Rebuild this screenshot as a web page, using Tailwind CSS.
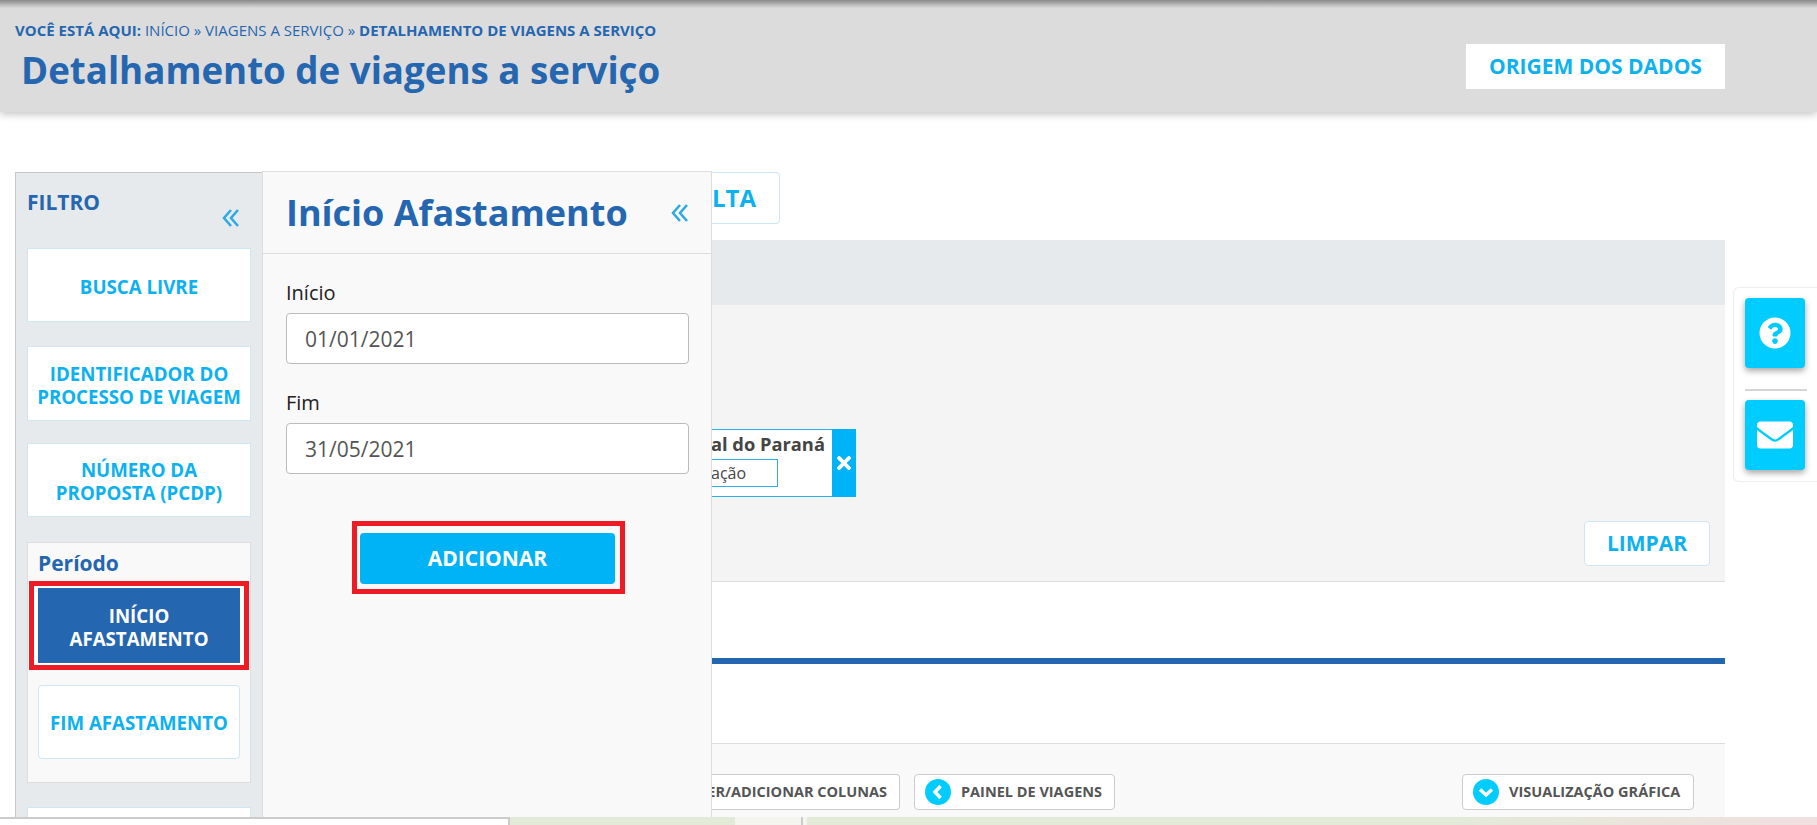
<!DOCTYPE html>
<html lang="pt-BR">
<head>
  <meta charset="UTF-8" />
  <title>Detalhamento de viagens a serviço</title>
  <script src="https://cdn.jsdelivr.net/npm/@tailwindcss/browser@4"></script>
</head>
<body class="bg-white">
<div class="relative h-[825px] w-[1817px] overflow-hidden font-['Open_Sans',sans-serif]">

  <!-- cabecalho -->
  <header class="relative h-[112px] bg-[#dcdcdc] shadow-[0_2px_8px_rgba(0,0,0,0.25)]">
    <div class="h-2 bg-gradient-to-b from-[#8a8a8a] to-[#dcdcdc]"></div>
    <div class="flex items-start justify-between pr-[92px]">
      <div>
        <p class="pl-[15px] pt-3 text-[15px] leading-5 whitespace-nowrap uppercase text-[#2566b0]"><b>Você está aqui:</b> Início » Viagens a serviço » <b>Detalhamento de viagens a serviço</b></p>
        <h1 class="pl-[21px] pt-[6px] text-[36.7px] leading-[48px] font-bold text-[#2566b0]">Detalhamento de viagens a serviço</h1>
      </div>
      <a class="mt-9 flex h-[45px] w-[259px] items-center justify-center bg-white text-[21px] font-bold text-[#0db1f0]">ORIGEM DOS DADOS</a>
    </div>
  </header>

  <!-- conteudo atras dos paineis -->
  <main class="ml-[711px] mr-[92px] pt-[60px]">
    <a class="flex h-[52px] w-[69px] items-center justify-end rounded-r-sm border border-l-0 border-[#cfe6f3] pr-[23px] text-[24px] font-bold text-[#0db1f0]">LTA</a>
    <div class="mt-4 h-[65px] bg-[#e7eaec]"></div>
    <section class="flex h-[277px] flex-col border-b border-[#dddddd] bg-[#f4f4f4]">
      <div class="mt-[124px] flex h-[68px] w-[145px] border-y border-r-0 border-[#2bb0e4] bg-white">
        <div class="flex-1 text-[#444444]">
          <p class="pt-[2px] text-[18.3px] leading-6 font-bold">al do Paraná</p>
          <p class="mt-[3px] flex h-[28px] w-[67px] items-center border-y border-r border-[#2bb0e4] text-[16px]">ação</p>
        </div>
        <span class="-my-px flex w-6 items-center justify-center bg-[#00b2f6]">
          <svg class="h-[14px] w-[14px] fill-white" viewBox="0 80 352 352"><path d="M242.7 256l100-100c12.3-12.3 12.3-32.2 0-44.5l-22.2-22.2c-12.3-12.3-32.2-12.3-44.5 0L176 189.3 76 89.3c-12.3-12.3-32.2-12.3-44.5 0L9.3 111.5c-12.3 12.3-12.3 32.2 0 44.5l100 100-100 100c-12.3 12.3-12.3 32.2 0 44.5l22.2 22.2c12.3 12.3 32.2 12.3 44.5 0l100-100 100 100c12.3 12.3 32.2 12.3 44.5 0l22.2-22.2c12.3-12.3 12.3-32.2 0-44.5z"/></svg>
        </span>
      </div>
      <div class="mt-[24px] flex justify-end pr-[15px]">
        <a class="flex h-[45px] w-[126px] items-center justify-center rounded-sm border border-[#cfe6f3] bg-white text-[21px] font-bold text-[#0db1f0]">LIMPAR</a>
      </div>
    </section>
    <div class="mt-[76px] h-[6px] bg-[#2566b0]"></div>
    <section class="mt-[79px] flex h-[76px] items-start border-t border-[#dddddd] bg-[#f9f9f9] pt-[30px] pr-[31px] text-[14.5px] font-bold whitespace-nowrap text-[#555555]">
      <a class="flex h-9 w-[189px] items-center justify-end rounded-r-sm border-y border-r border-[#cccccc] bg-white pr-3">ER/ADICIONAR COLUNAS</a>
      <a class="ml-[14px] flex h-9 w-[201px] items-center gap-[10px] rounded-sm border border-[#cccccc] bg-white pl-[10px]">
        <svg class="h-[26px] w-[26px] shrink-0" viewBox="0 0 26 26"><circle cx="13" cy="13" r="13" fill="#00ccff"/><path d="M15.5 7 L10 13 L15.5 19" fill="none" stroke="#fff" stroke-width="3.5"/></svg>
        PAINEL DE VIAGENS
      </a>
      <a class="ml-auto flex h-9 w-[232px] items-center gap-[10px] rounded-sm border border-[#cccccc] bg-white pl-[10px]">
        <svg class="h-[26px] w-[26px] shrink-0" viewBox="0 0 26 26"><circle cx="13" cy="13" r="13" fill="#00ccff"/><path d="M7 10.5 L13 16 L19 10.5" fill="none" stroke="#fff" stroke-width="3.5"/></svg>
        VISUALIZAÇÃO GRÁFICA
      </a>
    </section>
  </main>

  <!-- faixa inferior -->
  <div class="absolute inset-x-0 bottom-0 z-20 flex h-2 bg-gradient-to-r from-[#e3ead8] from-80% to-[#f0e0e0]">
    <div class="w-[510px] border-t-2 border-r-2 border-[#cccccc] bg-white"></div>
    <div class="ml-[225px] w-[66px] bg-[#f3f5ee]"></div>
    <div class="w-[6px] border-l-2 border-[#cccccc] bg-[#f3f5ee]"></div>
  </div>

  <!-- painel filtro -->
  <aside class="absolute top-[172px] bottom-0 left-[15px] z-10 flex w-[248px] flex-col border-t border-l border-[#c8c8c8] bg-[#e6eaed] pr-3 pl-[11px]">
    <div class="flex h-[75px] shrink-0 justify-between pt-[13px] pr-[11px]">
      <span class="text-[21px] leading-[32px] font-bold text-[#2566b0]">FILTRO</span>
      <svg class="mt-[22px] h-[20px] w-[18px] fill-none stroke-[#2ba9e0] stroke-[2.5]" viewBox="0 0 18 20"><path d="M9 2 L2 10 L9 18 M16 2 L9 10 L16 18"/></svg>
    </div>
    <a class="flex h-[74px] shrink-0 items-center justify-center border border-[#cfe6f3] bg-white pt-[2px] text-center text-[18.7px] leading-[23px] font-bold text-[#0db1f0]">BUSCA LIVRE</a>
    <a class="mt-6 flex h-[75px] shrink-0 items-center justify-center border border-[#cfe6f3] bg-white pt-[2px] text-center text-[18.7px] leading-[23px] font-bold text-[#0db1f0]">IDENTIFICADOR DO<br>PROCESSO DE VIAGEM</a>
    <a class="mt-[22px] flex h-[74px] shrink-0 items-center justify-center border border-[#cfe6f3] bg-white pt-[2px] text-center text-[18.7px] leading-[23px] font-bold text-[#0db1f0]">NÚMERO DA<br>PROPOSTA (PCDP)</a>
    <div class="mt-[25px] h-[241px] shrink-0 border border-[#dddddd] bg-[#f9f9f9] px-[10px]">
      <p class="h-[38px] pt-[6px] text-[21px] leading-[28px] font-bold text-[#2566b0]">Período</p>
      <div class="-mx-[9px] border-[5px] border-[#ed1c24] bg-white px-[4px] py-[2px]">
        <a class="flex h-[75px] items-center justify-center bg-[#2566b0] pt-[2px] text-center text-[18.7px] leading-[23px] font-bold text-white">INÍCIO<br>AFASTAMENTO</a>
      </div>
      <a class="mt-[15px] flex h-[74px] items-center justify-center rounded-sm border border-[#cfe6f3] bg-white pt-[2px] text-center text-[18.7px] font-bold text-[#0db1f0]">FIM AFASTAMENTO</a>
    </div>
    <div class="mt-6 h-10 shrink-0 border border-[#cfe6f3] bg-white"></div>
  </aside>

  <!-- painel detalhe -->
  <aside class="absolute top-[171px] bottom-0 left-[262px] z-10 w-[450px] border-x border-t border-[#dddddd] bg-[#f9f9f9]">
    <div class="flex h-[82px] items-center justify-between border-b border-[#dddddd] pr-[22px] pl-[23px]">
      <h2 class="text-[36px] font-bold text-[#2566b0]">Início Afastamento</h2>
      <svg class="h-[20px] w-[18px] fill-none stroke-[#2ba9e0] stroke-[2.5]" viewBox="0 0 18 20"><path d="M9 2 L2 10 L9 18 M16 2 L9 10 L16 18"/></svg>
    </div>
    <div class="flex flex-col pt-[25px] pr-[22px] pl-[23px] text-[20px] text-[#222222]">
      <label class="h-[34px] leading-7">Início</label>
      <input class="h-[51px] rounded-sm border border-[#bbbbbb] bg-white px-[18px] text-[21px] text-[#555555]" value="01/01/2021" />
      <label class="mt-[25px] h-[34px] leading-7">Fim</label>
      <input class="h-[51px] rounded-sm border border-[#bbbbbb] bg-white px-[18px] text-[21px] text-[#555555]" value="31/05/2021" />
      <div class="mt-[47px] ml-[66px] self-start border-[5px] border-[#ed1c24] bg-[#f9f9f9] pt-[7px] pr-[5px] pb-[5px] pl-[3px]">
        <button class="block h-[51px] w-[255px] rounded-sm bg-[#00b2f6] text-[21px] font-bold text-white">ADICIONAR</button>
      </div>
    </div>
  </aside>

  <!-- atalhos laterais -->
  <div class="absolute top-[287px] left-[1733px] z-10 flex h-[195px] w-[84px] flex-col rounded-l-md border border-r-0 border-[#eeeeee] pt-[10px] pl-[11px]">
    <a class="flex h-[70px] w-[60px] items-center justify-center rounded-sm bg-[#00ccff] shadow-[0_3px_6px_rgba(0,0,0,0.35)]">
      <svg class="h-8 w-8 fill-white" viewBox="0 0 512 512"><path d="M504 256c0 136.997-111.043 248-248 248S8 392.997 8 256C8 119.083 119.043 8 256 8s248 111.083 248 248zM262.655 90c-54.497 0-89.255 22.957-116.549 63.758-3.536 5.286-2.353 12.415 2.715 16.258l34.699 26.31c5.205 3.947 12.621 3.008 16.665-2.122 17.864-22.658 30.113-35.797 57.303-35.797 20.429 0 45.698 13.148 45.698 32.958 0 14.976-12.363 22.667-32.534 33.976C247.128 238.528 216 254.941 216 296v4c0 6.627 5.373 12 12 12h56c6.627 0 12-5.373 12-12v-1.333c0-28.462 83.186-29.647 83.186-106.667 0-58.002-60.165-102-116.531-102zM256 338c-25.365 0-46 20.635-46 46 0 25.364 20.635 46 46 46s46-20.636 46-46c0-25.365-20.635-46-46-46z"/></svg>
    </a>
    <div class="mt-[21px] mb-[9px] h-[2px] w-[62px] bg-[#d5d5d5]"></div>
    <a class="flex h-[70px] w-[60px] items-center justify-center rounded-sm bg-[#00ccff] shadow-[0_3px_6px_rgba(0,0,0,0.35)]">
      <svg class="h-[36px] w-[36px] fill-white" viewBox="0 0 512 512"><path d="M502.3 190.8c3.9-3.1 9.7-.2 9.7 4.7V400c0 26.5-21.5 48-48 48H48c-26.5 0-48-21.5-48-48V195.6c0-5 5.7-7.8 9.7-4.7 22.4 17.4 52.1 39.5 154.1 113.6 21.1 15.4 56.7 47.8 92.2 47.6 35.7.3 72-32.8 92.3-47.6 102-74.1 131.6-96.3 154-113.7zM256 320c23.2.4 56.6-29.2 73.4-41.4 132.7-96.3 142.8-104.7 173.4-128.7 5.8-4.5 9.2-11.5 9.2-18.9v-19c0-26.5-21.5-48-48-48H48C21.5 64 0 85.5 0 112v19c0 7.4 3.4 14.3 9.2 18.9 30.6 23.9 40.7 32.4 173.4 128.7 16.8 12.2 50.2 41.8 73.4 41.4z"/></svg>
    </a>
  </div>
</div>
</body>
</html>
